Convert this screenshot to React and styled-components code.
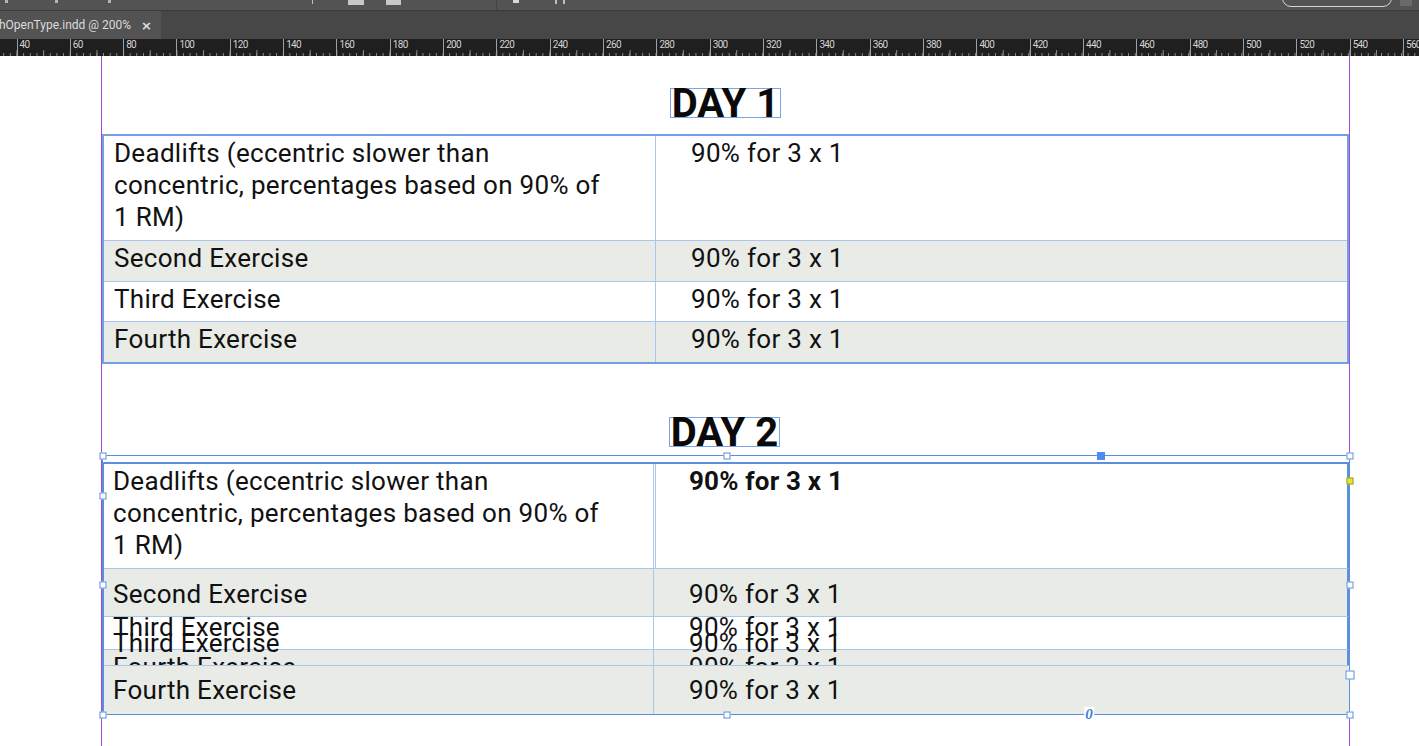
import React from 'react';
import styled, { createGlobalStyle } from 'styled-components';

const Global = createGlobalStyle`
  html, body { margin: 0; padding: 0; background: #ffffff; }
  body { font-family: Roboto, "Liberation Sans", sans-serif; overflow: hidden; }
  * { box-sizing: border-box; }
`;

const Shell = styled.div`
  display: flex;
  flex-direction: column;
  width: 1419px;
  height: 746px;
  overflow: hidden;
`;

/* ---------- top control bar (cut off) ---------- */
const Toolbar = styled.div`
  flex: 0 0 11px;
  height: 11px;
  background: #535353;
  border-bottom: 1px solid #3a3a3a;
  display: flex;
  align-items: flex-start;
  overflow: hidden;
`;
const ToolMark = styled.span`
  flex: 0 0 auto;
  margin-left: ${(p) => p.$ml}px;
  width: ${(p) => p.$w}px;
  height: ${(p) => p.$h}px;
  background: ${(p) => p.$c};
`;
const ToolPill = styled.span`
  flex: 0 0 auto;
  margin-left: ${(p) => p.$ml}px;
  margin-top: -11px;
  width: 110px;
  height: 18px;
  border: 1px solid #d6d6d6;
  border-radius: 9px;
  display: flex;
  align-items: flex-end;
  padding: 0 0 1px 10px;
`;
const PillBar = styled.span`
  width: 12px;
  height: 2px;
  background: #d6d6d6;
  margin-bottom: 8px;
`;

/* ---------- document tab strip ---------- */
const TabStrip = styled.div`
  flex: 0 0 28px;
  background: #474747;
  display: flex;
`;
const DocTab = styled.div`
  width: 161px;
  height: 100%;
  background: #535353;
  display: flex;
  align-items: center;
  gap: 10px;
  overflow: hidden;
  white-space: nowrap;
`;
const TabTitle = styled.span`
  margin-left: -1px;
  font: 400 12px Roboto, "Liberation Sans", sans-serif;
  color: #dcdcdc;
`;
const TabClose = styled.span`
  font: 700 13px "DejaVu Sans", sans-serif;
  color: #e0e0e0;
  line-height: 1;
`;

/* ---------- ruler ---------- */
const Ruler = styled.div`
  flex: 0 0 17px;
  height: 17px;
  display: flex;
  padding-left: 16.5px;
  overflow: hidden;
  background-color: #1f1f1f;
  background-image:
    linear-gradient(to right, #8c8c8c 1px, transparent 1px),
    linear-gradient(to right, #8c8c8c 1px, transparent 1px);
  background-size: 6.6667px 3px, 26.6667px 6px;
  background-repeat: repeat-x, repeat-x;
  background-position: 16.5px 100%, 16.5px 100%;
`;
const RulerMark = styled.span`
  flex: 0 0 53.3333px;
  height: 100%;
  border-left: 1px solid #a0a0a0;
  padding-left: 2px;
  font: 400 10px Roboto, "Liberation Sans", sans-serif;
  letter-spacing: -0.7px;
  line-height: 12px;
  color: #d4d4d4;
`;

/* ---------- page ---------- */
const Page = styled.div`
  flex: 1 1 auto;
  background: #ffffff;
  overflow: hidden;
`;
const Spread = styled.div`
  margin-left: 101px;
  width: 1249px;
  height: 100%;
  border-left: 1px solid #a04cd4;
  border-right: 1px solid #a04cd4;
  display: flex;
  flex-direction: column;
`;

const DayTitle = styled.div`
  align-self: center;
  margin-top: ${(p) => p.$mt}px;
  margin-left: ${(p) => p.$shift || 0}px;
  width: 111px;
  height: 30px;
  border: 1px solid #7ea3e2;
  text-align: center;
  font: 700 40px Roboto, "Liberation Sans", sans-serif;
  line-height: 30px;
  color: #0a0a0a;
  white-space: nowrap;
`;

const Table = styled.div`
  margin-top: ${(p) => p.$mt || 0}px;
  border-top: 2px solid ${(p) => p.$edge};
  border-bottom: ${(p) => (p.$noBottom ? '0' : `2px solid ${p.$edge}`)};
  border-left: ${(p) => p.$left}px solid ${(p) => p.$edge};
  border-right: ${(p) => p.$right}px solid ${(p) => p.$edge};
`;

const Row = styled.div`
  display: grid;
  grid-template-columns: ${(p) => p.$col}px 1fr;
  height: ${(p) => p.$h}px;
  box-sizing: content-box;
  background: ${(p) => (p.$shade ? '#e8ebe6' : '#ffffff')};
  border-top: ${(p) => (p.$first ? '0' : '1px solid #aac6ee')};
  border-right: ${(p) => (p.$rightEdge ? '2px solid #5d91de' : '0')};
  overflow: ${(p) => (p.$spill ? 'visible' : 'hidden')};
`;

const Cell = styled.div`
  padding: ${(p) => p.$pt}px 0 0 ${(p) => p.$pl}px;
  font: ${(p) => (p.$bold ? 700 : 400)} 26px Roboto, "Liberation Sans", sans-serif;
  letter-spacing: ${(p) => (p.$bold ? '0.2px' : '0.3px')};
  line-height: ${(p) => p.$lh || 32}px;
  color: #111111;
  overflow: ${(p) => (p.$spill ? 'visible' : 'hidden')};
  ${(p) => (p.$divider ? `border-left: ${p.$divider};` : '')}
`;

const Line = styled.div`
  white-space: nowrap;
`;

/* selected frame around day 2 */
const SelFrame = styled.div`
  position: relative;
  margin-top: 8px;
  margin-right: -1px;
  border: 1px solid #5b8fdc;
  padding-top: 6px;
`;
const Handle = styled.span`
  position: absolute;
  left: ${(p) => p.$x}px;
  top: ${(p) => p.$y}px;
  width: ${(p) => p.$s || 7}px;
  height: ${(p) => p.$s || 7}px;
  transform: translate(-50%, -50%);
  background: ${(p) => p.$fill || '#ffffff'};
  border: 1px solid ${(p) => p.$stroke || '#5b8fdc'};
`;
const PortMark = styled.span`
  position: absolute;
  left: ${(p) => p.$x}px;
  top: ${(p) => p.$y}px;
  transform: translate(-50%, -55%);
  font: italic 700 15px "Liberation Serif", serif;
  color: #3d7fe0;
  background: #ffffff;
  line-height: 1;
  padding: 0 1px;
`;

const exercises = ['Second Exercise', 'Third Exercise', 'Fourth Exercise'];
const dose = '90% for 3 x 1';
const deadlift = [
  'Deadlifts (eccentric slower than',
  'concentric, percentages based on 90% of',
  '1 RM)',
];

const rulerLabels = Array.from({ length: 27 }, (_, i) => 40 + i * 20);

function Day1() {
  const rows = [
    { h: 104, shade: false, left: deadlift, right: [dose] },
    { h: 40, shade: true, left: [exercises[0]], right: [dose] },
    { h: 39, shade: false, left: [exercises[1]], right: [dose] },
    { h: 40, shade: true, left: [exercises[2]], right: [dose] },
  ];
  return (
    <Table $mt={16} $edge="#72a0e6" $left={2} $right={2}>
      {rows.map((r, i) => (
        <Row key={i} $col={551} $h={r.h} $shade={r.shade} $first={i === 0}>
          <Cell $pt={1} $pl={10}>
            {r.left.map((t) => (
              <Line key={t}>{t}</Line>
            ))}
          </Cell>
          <Cell $pt={1} $pl={35} $divider="1px solid #aac6ee">
            {r.right.map((t) => (
              <Line key={t}>{t}</Line>
            ))}
          </Cell>
        </Row>
      ))}
    </Table>
  );
}

function Day2() {
  return (
    <SelFrame>
      <Table $edge="#5b8fdc" $left={1} $right={0} $noBottom>
        <Row $col={549} $h={104} $first $rightEdge>
          <Cell $pt={1} $pl={9}>
            {deadlift.map((t) => (
              <Line key={t}>{t}</Line>
            ))}
          </Cell>
          <Cell $pt={1} $pl={33} $bold $divider="3px double #aac6ee">
            <Line>{dose}</Line>
          </Cell>
        </Row>
        <Row $col={549} $h={47} $shade $rightEdge>
          <Cell $pt={9} $pl={9}>
            <Line>{exercises[0]}</Line>
          </Cell>
          <Cell $pt={9} $pl={35} $divider="1px solid #aac6ee">
            <Line>{dose}</Line>
          </Cell>
        </Row>
        <Row $col={549} $h={32} $rightEdge $spill>
          <Cell $pt={2} $pl={9} $lh={16} $spill>
            <Line>{exercises[1]}</Line>
            <Line>{exercises[1]}</Line>
          </Cell>
          <Cell $pt={2} $pl={35} $lh={16} $spill $divider="1px solid #aac6ee">
            <Line>{dose}</Line>
            <Line>{dose}</Line>
          </Cell>
        </Row>
        <Row $col={549} $h={15} $shade $rightEdge>
          <Cell $pt={1} $pl={9}>
            <Line>{exercises[2]}</Line>
          </Cell>
          <Cell $pt={1} $pl={35} $divider="1px solid #aac6ee">
            <Line>{dose}</Line>
          </Cell>
        </Row>
        <Row $col={549} $h={48} $shade>
          <Cell $pt={8} $pl={9}>
            <Line>{exercises[2]}</Line>
          </Cell>
          <Cell $pt={8} $pl={35} $divider="1px solid #aac6ee">
            <Line>{dose}</Line>
          </Cell>
        </Row>
      </Table>

      <Handle $x={0} $y={0} />
      <Handle $x={624} $y={0} />
      <Handle $x={1247} $y={0} />
      <Handle $x={998} $y={0} $s={8} $fill="#4a8cf0" $stroke="#4a8cf0" />
      <Handle $x={1247} $y={25} $fill="#f2e41c" $stroke="#8f9b62" />
      <Handle $x={0} $y={40} />
      <Handle $x={0} $y={129} />
      <Handle $x={1247} $y={129} />
      <Handle $x={1247} $y={219} $s={9} />
      <Handle $x={0} $y={259} />
      <Handle $x={624} $y={259} />
      <Handle $x={1247} $y={259} />
      <PortMark $x={986} $y={259}>0</PortMark>
    </SelFrame>
  );
}

export default function App() {
  return (
    <Shell>
      <Global />
      <Toolbar>
        <ToolMark $ml={5} $w={3} $h={3} $c="#b5b5b5" />
        <ToolMark $ml={47} $w={3} $h={3} $c="#b5b5b5" />
        <ToolMark $ml={50} $w={3} $h={3} $c="#b5b5b5" />
        <ToolMark $ml={201} $w={1} $h={4} $c="#c0c0c0" />
        <ToolMark $ml={35} $w={16} $h={5} $c="#c8c8c8" />
        <ToolMark $ml={22} $w={15} $h={5} $c="#c8c8c8" />
        <ToolMark $ml={95} $w={1} $h={10} $c="#454545" />
        <ToolMark $ml={16} $w={6} $h={3} $c="#d8d8d8" />
        <ToolMark $ml={36} $w={2} $h={4} $c="#bdbdbd" />
        <ToolMark $ml={6} $w={2} $h={4} $c="#bdbdbd" />
        <ToolPill $ml={717}>
          <PillBar />
        </ToolPill>
        <ToolMark $ml={8} $w={12} $h={6} $c="#6a6a6a" />
      </Toolbar>

      <TabStrip>
        <DocTab>
          <TabTitle>hOpenType.indd @ 200%</TabTitle>
          <TabClose>×</TabClose>
        </DocTab>
      </TabStrip>

      <Ruler>
        {rulerLabels.map((n) => (
          <RulerMark key={n}>{n}</RulerMark>
        ))}
      </Ruler>

      <Page>
        <Spread>
          <DayTitle $mt={32}>DAY 1</DayTitle>
          <Day1 />
          <DayTitle $mt={53} $shift={-2}>DAY 2</DayTitle>
          <Day2 />
        </Spread>
      </Page>
    </Shell>
  );
}
